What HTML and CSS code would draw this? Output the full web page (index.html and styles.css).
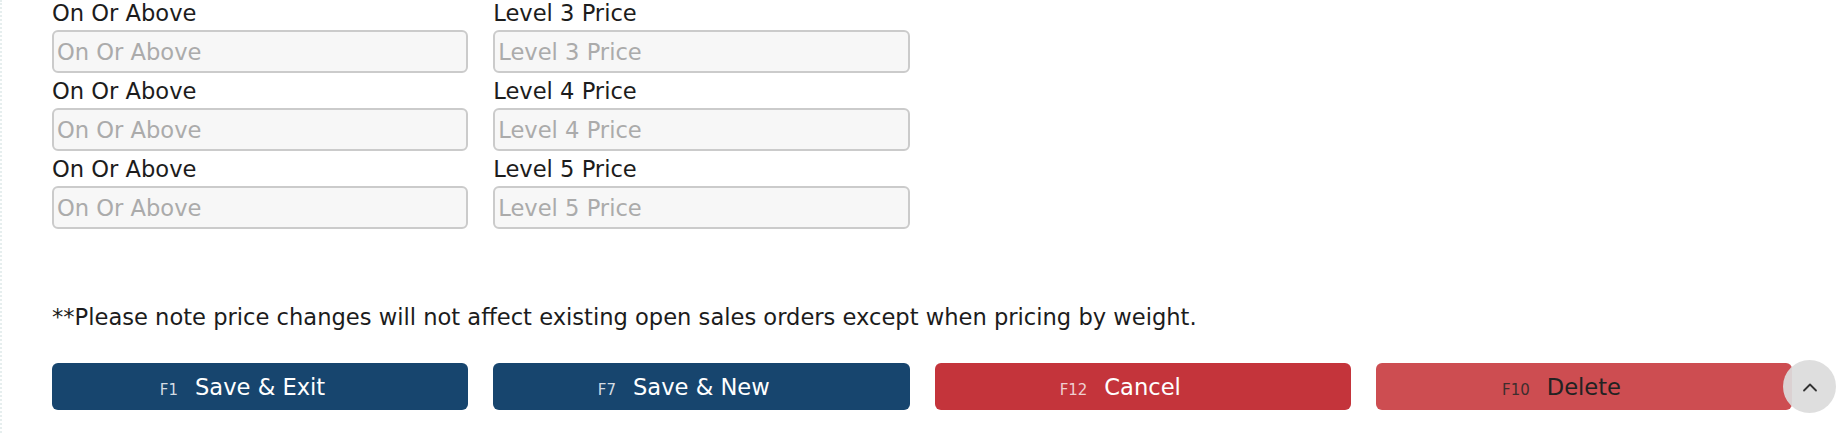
FILE: index.html
```html
<!DOCTYPE html>
<html lang="en">
<head>
<meta charset="utf-8">
<title>Pricing levels</title>
<link rel="stylesheet" href="styles.css">
</head>
<body>
<div class="page">
  <div class="fields">
    <div class="field">
      <label class="label">On Or Above</label>
      <input class="input" type="text" placeholder="On Or Above">
    </div>
    <div class="field">
      <label class="label">Level 3 Price</label>
      <input class="input" type="text" placeholder="Level 3 Price">
    </div>
    <div class="field">
      <label class="label">On Or Above</label>
      <input class="input" type="text" placeholder="On Or Above">
    </div>
    <div class="field">
      <label class="label">Level 4 Price</label>
      <input class="input" type="text" placeholder="Level 4 Price">
    </div>
    <div class="field">
      <label class="label">On Or Above</label>
      <input class="input" type="text" placeholder="On Or Above">
    </div>
    <div class="field">
      <label class="label">Level 5 Price</label>
      <input class="input" type="text" placeholder="Level 5 Price">
    </div>
  </div>

  <p class="note">**Please note price changes will not affect existing open sales orders except when pricing by weight.</p>

  <div class="actions">
    <button class="btn btn-primary"><span class="btn-text"><span class="key">F1</span>Save &amp; Exit</span></button>
    <button class="btn btn-primary"><span class="btn-text"><span class="key">F7</span>Save &amp; New</span></button>
    <button class="btn btn-danger"><span class="btn-text"><span class="key">F12</span>Cancel</span></button>
    <button class="btn btn-delete"><span class="btn-text"><span class="key">F10</span>Delete</span></button>
  </div>
</div>

<button class="to-top" aria-label="Back to top">
  <svg width="16" height="10" viewBox="0 0 16 10"><path d="M2 8.5 L8 2.5 L14 8.5" fill="none" stroke="#333" stroke-width="1.8" stroke-linecap="round" stroke-linejoin="round"/></svg>
</button>
</body>
</html>
```

FILE: styles.css
```css
html, body {
  margin: 0;
  padding: 0;
  background: #ffffff;
}

body {
  font-family: "DejaVu Sans", Verdana, sans-serif;
  font-size: 22.6px;
  color: #1c1c1c;
  border-left: 2px dotted #e6eeee;
  min-height: 433px;
  box-sizing: border-box;
}

.page {
  padding: 0 49px 0 50px;
}

.fields {
  display: grid;
  grid-template-columns: repeat(4, 1fr);
  column-gap: 25px;
}

.field:nth-child(odd) {
  grid-column: 1;
}

.field:nth-child(even) {
  grid-column: 2;
}

.field {
  display: flex;
  flex-direction: column;
}

.label {
  display: block;
  line-height: 26px;
  margin-bottom: 4px;
  color: #1c1c1c;
}

.input {
  box-sizing: border-box;
  height: 43px;
  width: 100%;
  margin: 0 0 5px 0;
  padding: 0 3px;
  border: 2px solid #cbcbcb;
  border-radius: 6px;
  background: #f7f7f7;
  font-family: "DejaVu Sans", Verdana, sans-serif;
  font-size: 22.6px;
  color: #333;
  outline: none;
}

.input::placeholder {
  color: #ababab;
}

.note {
  margin: 70px 0 0 0;
  line-height: 26px;
  color: #1c1c1c;
}

.actions {
  display: grid;
  grid-template-columns: repeat(4, 1fr);
  column-gap: 25px;
  margin-top: 33px;
}

.btn {
  height: 47px;
  border: none;
  border-radius: 6px;
  display: flex;
  align-items: center;
  justify-content: center;
  font-family: "DejaVu Sans", Verdana, sans-serif;
  font-size: 22.6px;
  padding: 0;
  cursor: pointer;
}

.btn-text {
  position: relative;
  line-height: 26px;
}

.key {
  position: absolute;
  right: 100%;
  bottom: 1px;
  margin-right: 17px;
  font-size: 15px;
  line-height: 18px;
  white-space: nowrap;
}

.btn-primary {
  background: #17456e;
  color: #ffffff;
}

.btn-primary .key {
  color: #d3dbe3;
}

.btn-danger {
  background: #c4343b;
  color: #ffffff;
}

.btn-danger .key {
  color: #efcfd0;
}

.btn-delete {
  background: #cd4d51;
  color: #222222;
}

.btn-delete .key {
  color: #3e2e2e;
}

.to-top {
  position: fixed;
  right: 5px;
  bottom: 20px;
  width: 53px;
  height: 53px;
  border-radius: 50%;
  border: none;
  padding: 0;
  background: rgba(220, 220, 220, 0.93);
  display: flex;
  align-items: center;
  justify-content: center;
}
```
